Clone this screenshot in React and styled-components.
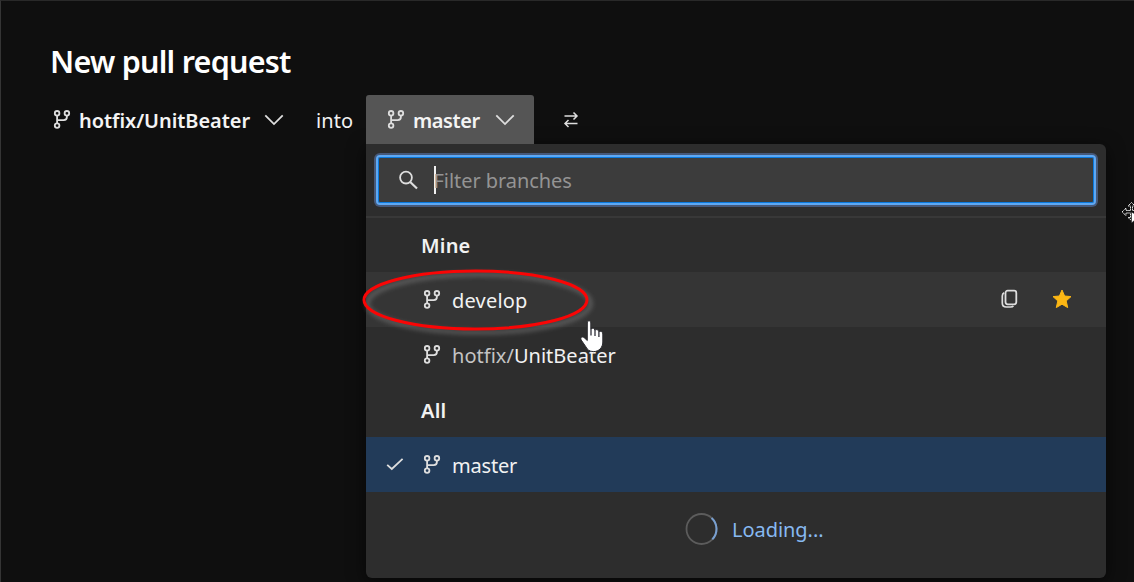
import React from "react";
import styled, { createGlobalStyle, css } from "styled-components";

const GlobalStyle = createGlobalStyle`
  *, *::before, *::after { box-sizing: border-box; }
  body { margin: 0; background: #0f0f0f; overflow: hidden; }
`;

const Page = styled.main`
  position: relative;
  width: 1134px;
  height: 582px;
  overflow: hidden;
  background: #0f0f0f;
  border-top: 1px solid #292929;
  border-left: 1px solid #353535;
  color: #f2f2f2;
  font-family: "Noto Sans", "Open Sans", sans-serif;
  font-size: 20px;
  line-height: 28px;
  white-space: nowrap;
`;

const Title = styled.h1`
  margin: 0;
  padding: 39px 0 0 49px;
  height: 94px;
  font-size: 30.5px;
  line-height: 43px;
  font-weight: 600;
  letter-spacing: -0.75px;
  color: #fff;
`;

const PickerBar = styled.div`
  display: flex;
  align-items: center;
  height: 49px;
  padding-left: 31px;
`;

const BranchButton = styled.button`
  display: flex;
  align-items: center;
  width: ${(p) => p.$width}px;
  height: 49px;
  padding: 0 19px 0 20px;
  border: 0;
  border-radius: 3px 3px 0 0;
  background: ${(p) => (p.$open ? "#555555" : "transparent")};
  color: #f4f4f4;
  font: inherit;
  font-weight: 600;
`;

const Label = styled.span`
  letter-spacing: ${(p) => p.$track || 0}px;
  padding-top: ${(p) => p.$drop || 0}px;
`;

const ButtonLabel = styled(Label)`
  flex: 1;
  text-align: left;
  margin-left: 7px;
  padding-top: 2px;
`;

const Into = styled(Label)`
  width: 50px;
  margin-left: 13px;
  padding-top: 2px;
`;

const SwapButton = styled.button`
  display: flex;
  margin-left: 29px;
  padding: 0;
  border: 0;
  background: none;
`;

const Panel = styled.section`
  width: 740px;
  height: 434px;
  margin-left: 365px;
  background: #2d2d2d;
  border-radius: 0 6px 6px 6px;
  box-shadow: 0 4px 18px rgba(0, 0, 0, 0.6);
`;

const FilterArea = styled.div`
  height: 74px;
  padding: 11px 10px 0;
  border-bottom: 2px solid #383838;
`;

const FilterBox = styled.div`
  display: flex;
  align-items: center;
  height: 50px;
  padding-left: 20px;
  background: #3c3c3c;
  border: 2px solid #5ea8f3;
  border-radius: 4px;
  box-shadow: inset 0 0 0 1px #0a7add, 0 0 0 2px #46597a;
`;

const Caret = styled.span`
  width: 1.5px;
  height: 28px;
  margin-left: 16px;
  background: #f1f1f1;
`;

const Placeholder = styled(Label)`
  margin-left: -2px;
  padding-top: 1px;
  color: #949494;
`;

const rowSize = css`
  display: flex;
  align-items: center;
  height: 55px;
`;

const GroupHeading = styled.h2`
  ${rowSize}
  margin: 0;
  padding: ${(p) => p.$drop || 0}px 0 0 55px;
  height: ${(p) => p.$height || 55}px;
  font-size: inherit;
  font-weight: 600;
  letter-spacing: ${(p) => p.$track}px;
`;

const BranchRow = styled.div`
  ${rowSize}
  padding-right: 34px;
  background: ${(p) => (p.$state === "selected" ? "#223b59" : p.$state === "hover" ? "#353535" : "transparent")};
`;

const CheckSlot = styled.span`
  display: flex;
  width: 56px;
  padding-left: 20px;
`;

const BranchName = styled(Label)`
  flex: 1;
  margin-left: 10px;
  padding-top: 3px;
`;

const Muted = styled.span`
  color: #c4c4c4;
`;

const RowActions = styled.span`
  display: flex;
  align-items: center;
  gap: 33px;
`;

const LoadingRow = styled.div`
  display: flex;
  align-items: center;
  height: 74px;
  padding-left: 319px;
  gap: 14px;
  color: #87b9f1;
`;

const Overlay = styled.svg`
  position: absolute;
  left: ${(p) => p.$x}px;
  top: ${(p) => p.$y}px;
  pointer-events: none;
  overflow: visible;
`;

const Glyph = styled.svg`
  display: block;
  flex: none;
  fill: none;
  stroke: #dedede;
  stroke-width: 1.8;
  transform: translateY(${(p) => p.$shift || 0}px);
`;

const BranchIcon = () => (
  <Glyph width="20" height="20" viewBox="0 0 20 20" $shift={-0.5}>
    <circle cx="5.1" cy="3.8" r="2.3" />
    <circle cx="14.9" cy="3.8" r="2.3" />
    <circle cx="5.1" cy="16.1" r="2.3" />
    <path d="M5.1 6.1V13.8M14.9 6.1V7.6Q14.9 10.6 11.7 10.6H5.1" />
  </Glyph>
);

const ChevronIcon = () => (
  <Glyph width="20" height="12" viewBox="0 0 20 12">
    <path d="M1.3 1.4L10 10.1L18.7 1.4" />
  </Glyph>
);

export default function App() {
  return (
    <>
      <GlobalStyle />
      <Page>
        <Title>New pull request</Title>
        <PickerBar>
          <BranchButton $width={271}>
            <BranchIcon />
            <ButtonLabel $track={-0.06}>hotfix/UnitBeater</ButtonLabel>
            <ChevronIcon />
          </BranchButton>
          <Into $track={0.1}>into</Into>
          <BranchButton $width={168} $open>
            <BranchIcon />
            <ButtonLabel $track={-0.4}>master</ButtonLabel>
            <ChevronIcon />
          </BranchButton>
          <SwapButton aria-label="Swap branches">
            <Glyph width="16" height="18" viewBox="0 0 16 18">
              <path d="M1.5 5H14M10.5 1.5L14 5L10.5 8.5M14.5 12.5H2M5.5 9L2 12.5L5.5 16" strokeWidth="1.5" />
            </Glyph>
          </SwapButton>
        </PickerBar>

        <Panel>
          <FilterArea>
            <FilterBox>
              <Glyph width="20" height="20" viewBox="0 0 20 20">
                <circle cx="8" cy="7.6" r="5.9" />
                <path d="M12.2 12L19 18.5" strokeWidth="2.2" />
              </Glyph>
              <Caret />
              <Placeholder $track={-0.06}>Filter branches</Placeholder>
            </FilterBox>
          </FilterArea>
          <GroupHeading $height={54} $drop={1} $track={0.2}>Mine</GroupHeading>
          <BranchRow $state="hover">
            <CheckSlot />
            <BranchIcon />
            <BranchName $track={0.2}>develop</BranchName>
            <RowActions>
              <Glyph width="18" height="20" viewBox="0 0 18 20" $shift={-1}>
                <rect x="4.5" y="1.7" width="10.8" height="13.6" rx="2.2" />
                <path d="M3.2 3.8Q1.3 4.6 1.3 7V14Q1.3 18 5.3 18H9.5Q11.7 18 12.3 16.8" strokeWidth="1.7" />
              </Glyph>
              <Glyph width="20" height="20" viewBox="0 0 20 20" $shift={-1}>
                <path
                  d="M10 1L12.6 7L19 7.6L14.2 11.9L15.7 18.6L10 15.2L4.3 18.6L5.8 11.9L1 7.6L7.4 7Z"
                  fill="#fcb714"
                  stroke="#fcb714"
                  strokeWidth="1"
                  strokeLinejoin="round"
                />
              </Glyph>
            </RowActions>
          </BranchRow>
          <BranchRow>
            <CheckSlot />
            <BranchIcon />
            <BranchName $track={0.02}><Muted>hotfix/</Muted>UnitBeater</BranchName>
          </BranchRow>
          <GroupHeading $drop={2} $track={0.2}>All</GroupHeading>
          <BranchRow $state="selected">
            <CheckSlot>
              <Glyph width="18" height="14" viewBox="0 0 18 14" $shift={-1}>
                <path d="M1.2 7.8L5.8 12L16.6 1.8" />
              </Glyph>
            </CheckSlot>
            <BranchIcon />
            <BranchName $track={-0.2}>master</BranchName>
          </BranchRow>
          <LoadingRow>
            <Glyph width="33" height="33" viewBox="0 0 33 33" $shift={-0.5}>
              <circle cx="16.5" cy="16.5" r="15" stroke="#5c5c5c" />
              <path d="M26.6 5.4A15 15 0 0 1 27.3 26.9" stroke="#789fd0" strokeWidth="2" />
            </Glyph>
            <Label $track={-0.05} $drop={1}>Loading...</Label>
          </LoadingRow>
        </Panel>

        <Overlay $x={361} $y={267} width="230" height="66">
          <defs>
            <filter id="halo" x="-10%" y="-20%" width="120%" height="150%">
              <feGaussianBlur stdDeviation="2" />
            </filter>
          </defs>
          <ellipse cx="117" cy="35.5" rx="111.5" ry="29" fill="none" stroke="#808080" strokeOpacity="0.45" strokeWidth="5" filter="url(#halo)" />
          <ellipse cx="113.5" cy="32" rx="111.5" ry="29" fill="none" stroke="#fa0505" strokeWidth="3" />
        </Overlay>

        <Overlay $x={577.5} $y={317.5} width="26" height="34">
          <path
            d="M8.3 4C8.3 1 11.8 1 11.8 4V10C13.3 8.5 15.5 9 15.8 11C17.5 10 19.5 10.8 19.7 12.5C21.8 11.8 23.8 12.8 23.8 15V23C23.8 28.5 20 32.6 14.5 32.6C10.3 32.6 8.3 30.5 6.7 27.5L2.2 21C1 18.5 3.2 17 5.2 18.7L8.3 21.5Z"
            fill="#fff"
            stroke="#2c2c30"
            strokeWidth="1"
          />
          <path d="M12 10V16.5M16 11V17M19.9 12.5V18" stroke="#30303a" strokeWidth="1.3" />
        </Overlay>

        <Overlay $x={1119} $y={200} width="20" height="24">
          <path
            d="M11.5 1.5L15 5H12.5V9.5H16M11.5 1.5L8 5H10.5V9.5H6V7L2 11L6 14.5V12H10.5V16.5H8L11 19"
            fill="none"
            stroke="#e7e7e7"
            strokeWidth="1"
            strokeDasharray="1.6 .5"
          />
          <path d="M11.5 11V22L19 15.5Z" fill="#fff" stroke="#111" strokeWidth=".5" />
        </Overlay>
      </Page>
    </>
  );
}
